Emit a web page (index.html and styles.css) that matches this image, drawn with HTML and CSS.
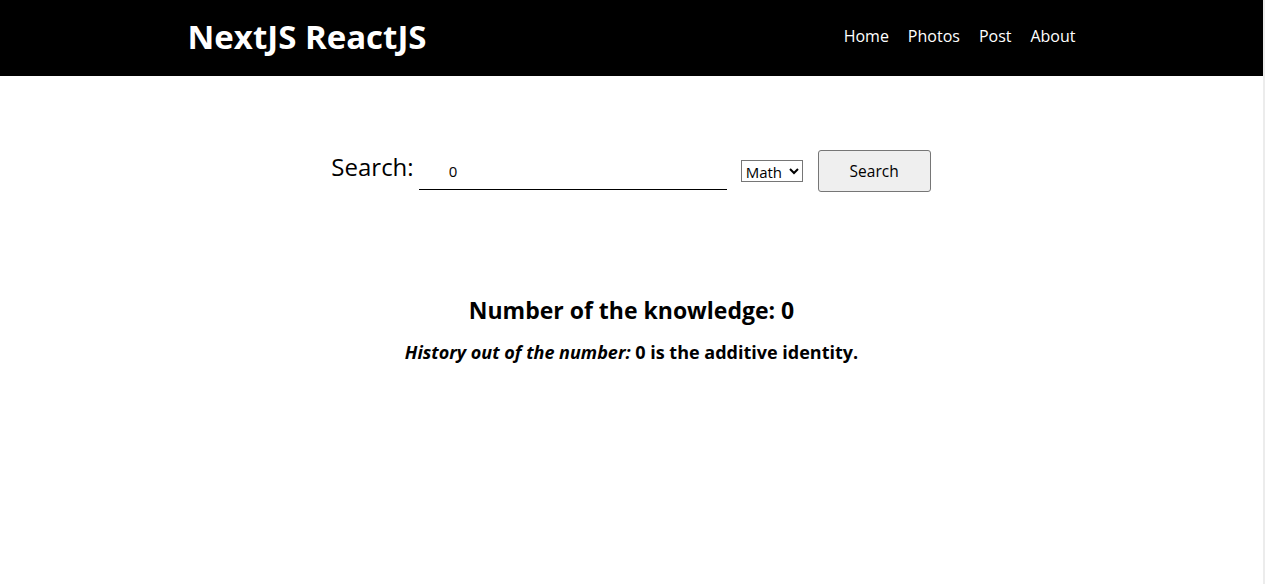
FILE: index.html
```html
<!DOCTYPE html>
<html>
<head>
<meta charset="utf-8">
<link rel="stylesheet" href="styles.css">
</head>
<body>
<div class="page">
  <header class="header">
    <div class="container header-inner">
      <div class="brand">NextJS ReactJS</div>
      <nav class="nav">
        <a href="#">Home</a>
        <a href="#">Photos</a>
        <a href="#">Post</a>
        <a href="#">About</a>
      </nav>
    </div>
  </header>
  <main class="main">
    <form class="search-row">
      <label class="search-label">Search:</label>
      <input class="search-input" type="text" value="0">
      <select class="search-select"><option>Math</option></select>
      <button class="search-btn" type="button">Search</button>
    </form>
    <h2 class="result-title">Number of the knowledge: 0</h2>
    <p class="result-text"><em>History out of the number:</em> 0 is the additive identity.</p>
  </main>
</div>
</body>
</html>
```
FILE: styles.css
```css
html, body {
  margin: 0;
  padding: 0;
  background: #fff;
}
body {
  font-family: "Open Sans", "Noto Sans", sans-serif;
  color: #000;
}
.page {
  width: 1263px;
  min-height: 584px;
  border-right: 2px solid #ececec;
  box-sizing: content-box;
}
.header {
  background: #000;
  height: 76px;
}
.container {
  width: 888px;
  margin: 0 auto;
}
.header-inner {
  height: 76px;
  display: flex;
  align-items: center;
  justify-content: space-between;
}
.brand {
  color: #fff;
  font-weight: 700;
  font-size: 33px;
  margin-top: -4px;
}
.nav {
  display: flex;
  gap: 19px;
  margin-right: 0;
  margin-top: -4px;
}
.nav a {
  color: #fff;
  text-decoration: none;
  font-size: 16px;
}
.main {
  display: flex;
  flex-direction: column;
  align-items: center;
}
.search-row {
  margin-top: 74px;
  margin-left: -1px;
  display: flex;
  align-items: center;
}
.search-label {
  font-size: 24px;
  margin-right: 5px;
  margin-top: -10px;
}
.search-input {
  width: 308px;
  box-sizing: border-box;
  border: none;
  border-bottom: 1px solid #000;
  outline: none;
  font-family: inherit;
  font-size: 15px;
  padding: 6px 10px 8px 30px;
  margin-top: 2px;
}
.search-select {
  margin-left: 14px;
  width: 62px;
  height: 22px;
  box-sizing: border-box;
  font-family: inherit;
  font-size: 15px;
  padding: 0;
  border: 1px solid #767676;
  border-radius: 0;
  background: #fff;
}
.search-btn {
  margin-left: 15px;
  width: 113px;
  height: 42px;
  font-family: inherit;
  font-size: 15.5px;
  background: #efefef;
  border: 1px solid #767676;
  border-radius: 3px;
  color: #000;
}
.result-title {
  margin: 102px 0 0;
  font-size: 23px;
  font-weight: 700;
}
.result-text {
  margin: 14px 0 0;
  font-size: 18px;
  font-weight: 700;
}
```
